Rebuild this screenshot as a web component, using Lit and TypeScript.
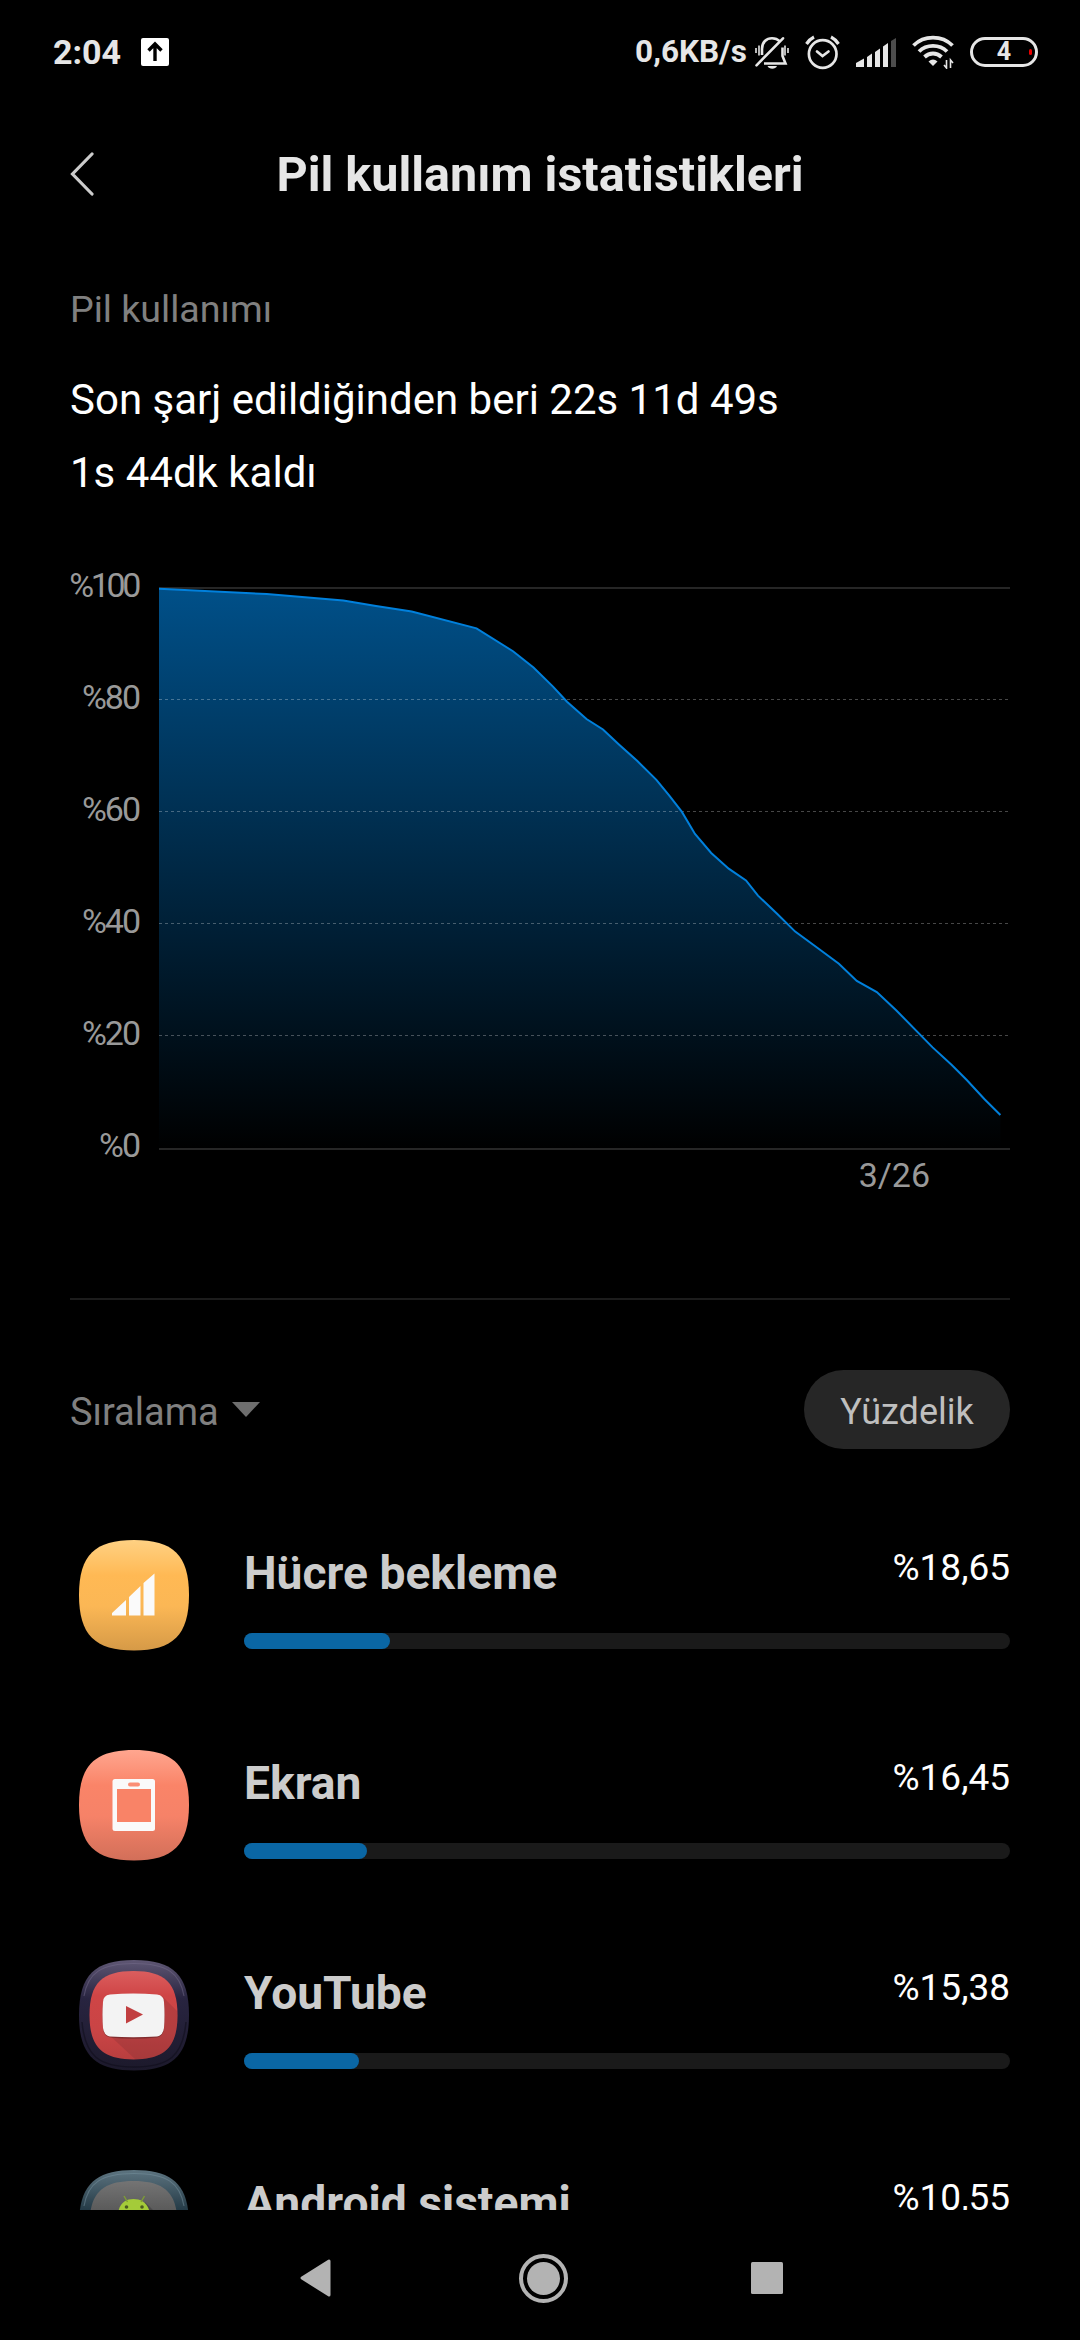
import { LitElement, html, css, svg } from "lit";
import { customElement, property } from "lit/decorators.js";
import { classMap } from "lit/directives/class-map.js";
import { styleMap } from "lit/directives/style-map.js";

interface UsageItem {
  icon: string;
  name: string;
  percent: string;
  bar: number;
}

const USAGE: UsageItem[] = [
  { icon: "cell", name: "Hücre bekleme", percent: "%18,65", bar: 19 },
  { icon: "screen", name: "Ekran", percent: "%16,45", bar: 16 },
  { icon: "youtube", name: "YouTube", percent: "%15,38", bar: 15 },
  { icon: "android", name: "Android sistemi", percent: "%10,55", bar: 11 },
];

const LEVELS: [number, number][] = [
  [0, 1.8], [107.7, 7], [184.3, 13.4], [217, 19], [252.7, 24.6], [317.5, 41.4],
  [354, 64.2], [374.5, 80.5], [394, 99.6], [408, 114.8], [427.5, 132], [444, 142.5],
  [460.2, 157.7], [478.1, 173.8], [497.4, 192.8], [510.1, 208.4], [522.9, 224.9], [536, 247],
  [552.2, 266], [569.7, 281.7], [587, 293.4], [599, 308.6], [618.6, 327.3], [636.2, 344.6],
  [660, 362], [679.9, 376.7], [697.8, 394], [717.8, 405], [737.4, 423.5], [773.6, 460.4],
  [792.5, 477.7], [808, 493.3], [825.3, 512], [841.4, 528],
];

const SQUIRCLE = "M55 0C94 0 110 15 110 55S94 110.500 55 110.500 0 95 0 55 16 0 55 0Z";

@customElement("status-bar")
export class StatusBar extends LitElement {
  static styles = css`
    :host {
      display: flex;
      align-items: center;
      box-sizing: border-box;
      height: 104px;
      padding: 0 42px 0 53px;
      color: #e6e6e6;
      font-weight: 700;
    }
    svg { display: block; flex: none; }
    .time { font-size: 34px; line-height: 40px; }
    .upload { margin-left: 20px; }
    .speed { margin-left: auto; font-size: 31.5px; line-height: 40px; }
    .bell { margin-left: 8px; }
    .icon { margin-left: 16px; }
    .battery {
      display: flex;
      align-items: center;
      justify-content: center;
      position: relative;
      box-sizing: border-box;
      width: 68px;
      height: 30px;
      margin-left: 15px;
      border: 3px solid #e6e6e6;
      border-radius: 15px;
      font-size: 25px;
      line-height: 28px;
    }
    .charge {
      position: absolute;
      right: 3px;
      top: 9px;
      width: 3px;
      height: 6px;
      border-radius: 1.5px;
      background: #e80000;
    }
  `;

  render() {
    return html`
      <span class="time">2:04</span>
      <svg class="upload" width="28" height="28" viewBox="0 0 28 28">
        <rect width="28" height="28" rx="2" fill="#fff" />
        <path d="M14 23V6M7.500 12.500L14 6L20.500 12.500" fill="none" stroke="#000" stroke-width="3.400" />
      </svg>
      <span class="speed">0,6KB/s</span>
      <svg class="bell" width="34" height="33" viewBox="0 0 34 33" fill="none" stroke="#e6e6e6">
        <path d="M7 19V13C7 6 11.500 2.200 17 2.200C20.500 2.200 23 3.500 24.700 5.200" stroke-width="2.600" />
        <path d="M27.500 11.500V20L30.500 27.500H9" stroke-width="2.600" />
        <path d="M1.500 29.300L28 2.300" stroke-width="2.600" stroke-linecap="round" />
        <path d="M1 12V17M4 9.500V19.500M33 12V17M30 9.500V19.500" stroke-width="1.600" />
        <path d="M12.500 30H22C20.500 33.500 14 33.500 12.500 30Z" fill="#e6e6e6" stroke="none" />
      </svg>
      <svg class="icon" width="35" height="35" viewBox="0 0 35 35" fill="none" stroke="#e6e6e6">
        <circle cx="17.700" cy="19" r="13.800" stroke-width="2.700" />
        <path d="M12 16.500L17.500 21L23.500 16.500" stroke-width="2.700" stroke-linecap="round" />
        <path d="M1.500 9C3.500 6 6 3.500 9 2M26 2C29 3.500 31.500 6 33.500 9" stroke-width="3.200" />
      </svg>
      <svg class="icon" width="40" height="29" viewBox="0 0 40 29" fill="#e6e6e6">
        <path d="M0 25L8 20.500V29H0Z" />
        <path d="M11 19L16 15.500V29H11ZM19 14L24 10.500V29H19ZM27 8.500L32 5V29H27Z" />
        <path d="M35 3L40 0V29H35Z" fill="#4d4d4d" />
      </svg>
      <svg class="icon" width="43" height="34" viewBox="0 0 43 34" fill="none" stroke="#e6e6e6" stroke-width="3.800">
        <path d="M1.500 10.500C12 0 30 0 40.500 10.500" />
        <path d="M7 16.500C14.500 9 27.500 9 35 16.500" />
        <path d="M12.500 22C17.500 17.300 24.500 17.300 29.500 22" />
        <path d="M16.500 26.500Q21 22.500 25.500 26.500L21 31Z" fill="#e6e6e6" stroke="none" />
        <path d="M34.500 25V33L32 30M38.500 33V25L41 28" stroke-width="1.600" />
      </svg>
      <div class="battery">4<span class="charge"></span></div>
    `;
  }
}

@customElement("level-chart")
export class LevelChart extends LitElement {
  static styles = css`
    :host {
      display: grid;
      grid-template-columns: 70px 851px;
      justify-content: space-between;
      align-items: start;
      color: #999;
      font-size: 34px;
      line-height: 40px;
    }
    .scale {
      display: flex;
      flex-direction: column;
      justify-content: space-between;
      align-items: flex-end;
      height: 600px;
    }
    .tick { white-space: nowrap; letter-spacing: -2px; margin-right: 1px; }
    .tick.full { letter-spacing: -3.400px; margin-right: 2px; }
    .plot { display: flex; flex-direction: column; padding-top: 22px; }
    .plot svg { display: block; }
    .dates { padding: 5px 80px 0 0; text-align: right; }
  `;

  render() {
    const line = LEVELS.map(([x, y]) => `${x},${y}`).join(" ");
    return html`
      <div class="scale">
        ${[100, 80, 60, 40, 20, 0].map(
          (n) => html`<span class=${classMap({ tick: true, full: n === 100 })}>%${n}</span>`
        )}
      </div>
      <div class="plot">
        <svg width="851" height="563" viewBox="0 0 851 563">
          <defs>
            <linearGradient id="level" x1="0" y1="0" x2="0" y2="563" gradientUnits="userSpaceOnUse">
              <stop offset="0" stop-color="#005089" />
              <stop offset="1" stop-color="#005089" stop-opacity="0" />
            </linearGradient>
          </defs>
          <path d="M0 1H851M0 562H851" stroke="#262626" stroke-width="2" />
          <polygon points="0,561 ${line} 841.4,561" fill="url(#level)" />
          ${[112.5, 224.5, 336.5, 448.5].map(
            (y) => svg`<path d="M0 ${y}H851" stroke="#fff" stroke-opacity=".28" stroke-width="1" stroke-dasharray="3 3" />`
          )}
          <polyline points="${line}" fill="none" stroke="#0080dc" stroke-width="2" />
        </svg>
        <div class="dates">3/26</div>
      </div>
    `;
  }
}

@customElement("app-icon")
export class AppIcon extends LitElement {
  @property() kind = "cell";

  static styles = css`
    :host { display: block; width: 110px; height: 111px; }
    svg { display: block; }
  `;

  private art() {
    switch (this.kind) {
      case "cell":
        return svg`
          <linearGradient id="bg" x1="0" y1="0" x2="0" y2="1">
            <stop offset="0" stop-color="#ffd183" /><stop offset=".32" stop-color="#ffb954" />
            <stop offset=".6" stop-color="#fbb755" /><stop offset="1" stop-color="#d69a47" />
          </linearGradient>
          <path d=${SQUIRCLE} fill="url(#bg)" />
          <path d="M33 75.500V73L47 60V75.500ZM50 57L61.500 46V75.500H50ZM64.500 43L75.500 33.500V75.500H64.500Z" fill="#fafafa" />`;
      case "screen":
        return svg`
          <linearGradient id="bg" x1="0" y1="0" x2="0" y2="1">
            <stop offset="0" stop-color="#ffa68f" /><stop offset=".32" stop-color="#fa8468" />
            <stop offset=".6" stop-color="#f68268" /><stop offset="1" stop-color="#d26f59" />
          </linearGradient>
          <path d=${SQUIRCLE} fill="url(#bg)" />
          <rect x="33.500" y="29" width="42.500" height="52" rx="2.500" fill="#fafafa" />
          <rect x="38" y="39" width="34" height="33" fill="#f98367" />
          <rect x="49" y="32.500" width="12" height="4" rx="2" fill="#fb8e75" />`;
      case "youtube":
        return svg`
          <linearGradient id="rim" x1="0" y1="0" x2="0" y2="1">
            <stop offset="0" stop-color="#5f5774" /><stop offset=".35" stop-color="#282440" />
            <stop offset="1" stop-color="#1c192b" />
          </linearGradient>
          <linearGradient id="bg" x1="0" y1="0" x2="0" y2="1">
            <stop offset="0" stop-color="#e06969" /><stop offset=".32" stop-color="#cf4546" />
            <stop offset=".65" stop-color="#c94445" /><stop offset="1" stop-color="#b23c3c" />
          </linearGradient>
          <clipPath id="face"><path d=${SQUIRCLE} transform="translate(10.500 11) scale(.8)" /></clipPath>
          <path d=${SQUIRCLE} fill="url(#rim)" />
          <path d="M3 62C6 96 20 107 55 107S104 96 107 62" fill="none" stroke="#0f0d1a" stroke-opacity=".55" stroke-width="1.500" />
          <path d="M5 36C9 13 22 3.500 55 3.500S101 13 105 36" fill="none" stroke="#7b7191" stroke-opacity=".45" stroke-width="1.200" />
          <g clip-path="url(#face)">
            <rect width="110" height="111" fill="url(#bg)" />
            <path d="M83 36L110 63V111H69L28 73Z" fill="#6b2a2c" fill-opacity=".22" />
          </g>
          <path d="M24 42Q24 35.500 31 34.500Q54 32.500 78 34.500Q85 35.500 85 42Q86 55 85 68Q84 75.500 78 76.500Q54 79 31 76.500Q25 75.500 24 68Q23 55 24 42Z" fill="#00000044" transform="translate(0 1)" />
          <path d="M24 42Q24 35.500 31 34.500Q54 32.500 78 34.500Q85 35.500 85 42Q86 55 85 68Q84 75.500 78 76.500Q54 78 31 76.500Q25 75.500 24 68Q23 55 24 42Z" fill="#f3f3f3" />
          <path d="M47 46L64 54.500L47 63.500Z" fill="#c13f40" />`;
      default:
        return svg`
          <linearGradient id="rim" x1="0" y1="0" x2="0" y2="1">
            <stop offset="0" stop-color="#5d7480" /><stop offset=".4" stop-color="#1e3440" />
            <stop offset="1" stop-color="#14222b" />
          </linearGradient>
          <linearGradient id="bg" x1="0" y1="0" x2="0" y2="1">
            <stop offset="0" stop-color="#747474" /><stop offset=".4" stop-color="#555" />
            <stop offset="1" stop-color="#444" />
          </linearGradient>
          <path d=${SQUIRCLE} fill="url(#rim)" />
          <path d="M5 36C9 13 22 3.500 55 3.500S101 13 105 36" fill="none" stroke="#7d96a3" stroke-opacity=".45" stroke-width="1.200" />
          <path d=${SQUIRCLE} transform="translate(10.500 11) scale(.8)" fill="url(#bg)" />
          <path d="M66 32L90 56V60H55Z" fill="#000" fill-opacity=".2" />
          <path d="M39 44C40 33 47 29 54.500 29S69.500 33 71 44Z" fill="#a4cb39" />
          <path d="M45 26L48.500 32M65.500 26L62 32" stroke="#7f9e34" stroke-width="1.400" />
          <circle cx="47.500" cy="37" r="1.800" fill="#4a5a20" /><circle cx="63" cy="37" r="1.800" fill="#4a5a20" />`;
    }
  }

  render() {
    return html`<svg width="110" height="111" viewBox="0 0 110 111">${this.art()}</svg>`;
  }
}

@customElement("usage-row")
export class UsageRow extends LitElement {
  @property({ attribute: false }) item!: UsageItem;

  static styles = css`
    :host {
      display: grid;
      grid-template-columns: 110px 766px;
      justify-content: space-between;
      box-sizing: border-box;
      height: 210px;
      padding: 50px 70px 0 78.500px;
      flex: none;
    }
    .body { padding-top: 3px; }
    .head { display: flex; justify-content: space-between; line-height: 60px; height: 60px; }
    .name { font-size: 46.2px; font-weight: 700; color: #ccc; }
    .percent { font-size: 37px; color: #fff; margin-top: -5px; }
    .track { height: 16px; margin-top: 30px; border-radius: 8px; background: #1a1a1a; }
    .fill { height: 16px; border-radius: 8px; background: #0a66a4; }
  `;

  render() {
    const { icon, name, percent, bar } = this.item;
    return html`
      <app-icon .kind=${icon}></app-icon>
      <div class="body">
        <div class="head"><span class="name">${name}</span><span class="percent">${percent}</span></div>
        <div class="track"><div class="fill" style=${styleMap({ width: `${bar}%` })}></div></div>
      </div>
    `;
  }
}

@customElement("app-root")
export class AppRoot extends LitElement {
  static styles = css`
    :host {
      display: flex;
      flex-direction: column;
      width: 1080px;
      height: 2340px;
      overflow: hidden;
      background: #000;
      color: #fff;
      font-family: Roboto, "Noto Sans", sans-serif;
    }
    svg { display: block; flex: none; }
    .titlebar {
      display: grid;
      grid-template-columns: 24px 1fr 24px;
      align-items: center;
      height: 141px;
      padding: 0 70px;
      flex: none;
    }
    .back { margin-bottom: 2px; }
    .title { margin: 0; font-size: 48.5px; line-height: 60px; font-weight: 700; color: #e6e6e6; text-align: center; }
    .summary { padding: 39px 70px 0; }
    .label { font-size: 37.6px; line-height: 50px; color: #808080; }
    .facts { margin: 29px 0 56px; font-size: 42px; line-height: 73px; }
    .fact { margin: 0; }
    .divider { height: 2px; margin: 103px 70px 0; background: #1c1c1c; flex: none; }
    .sortbar {
      display: flex;
      align-items: center;
      justify-content: space-between;
      height: 79px;
      margin: 70px 70px 0;
      flex: none;
    }
    .sort { display: flex; align-items: center; gap: 13px; font-size: 38px; line-height: 50px; color: #808080; }
    .sort span { padding-top: 5px; }
    .mode {
      display: flex;
      align-items: center;
      justify-content: center;
      box-sizing: border-box;
      width: 206px;
      height: 79px;
      padding-top: 4px;
      border-radius: 39.500px;
      background: #262626;
      color: #bfbfbf;
      font-size: 36px;
    }
    .list { display: flex; flex-direction: column; flex: 1; min-height: 0; margin-top: 41px; overflow: hidden; }
    .nav { display: flex; align-items: center; height: 130px; padding: 6px 0 0 300px; box-sizing: border-box; flex: none; }
    .home { margin-left: 188px; }
    .recent { margin-left: 183px; }
  `;

  render() {
    return html`
      <status-bar></status-bar>
      <header class="titlebar">
        <svg class="back" width="24" height="44" viewBox="0 0 24 44">
          <path d="M22 2L2.500 22L22 42" fill="none" stroke="#ccc" stroke-width="3.200" stroke-linecap="round" />
        </svg>
        <h1 class="title">Pil kullanım istatistikleri</h1>
      </header>
      <section class="summary">
        <div class="label">Pil kullanımı</div>
        <div class="facts">
          <p class="fact">Son şarj edildiğinden beri 22s 11d 49s</p>
          <p class="fact">1s 44dk kaldı</p>
        </div>
        <level-chart></level-chart>
      </section>
      <div class="divider"></div>
      <div class="sortbar">
        <div class="sort">
          <span>Sıralama</span>
          <svg width="28" height="16" viewBox="0 0 28 16"><path d="M0 0H28L14 15Z" fill="#6e6e6e" /></svg>
        </div>
        <div class="mode">Yüzdelik</div>
      </div>
      <main class="list">${USAGE.map((item) => html`<usage-row .item=${item}></usage-row>`)}</main>
      <nav class="nav">
        <svg width="31" height="38" viewBox="0 0 31 38">
          <path d="M29 2V36L2 19Z" fill="#b3b3b3" stroke="#b3b3b3" stroke-width="3" stroke-linejoin="round" />
        </svg>
        <svg class="home" width="49" height="49" viewBox="0 0 49 49">
          <circle cx="24.500" cy="24.500" r="22.500" fill="none" stroke="#b3b3b3" stroke-width="4" />
          <circle cx="24.500" cy="24.500" r="16.500" fill="#b3b3b3" />
        </svg>
        <svg class="recent" width="32" height="32" viewBox="0 0 32 32"><rect width="32" height="32" rx="1.500" fill="#b3b3b3" /></svg>
      </nav>
    `;
  }
}
